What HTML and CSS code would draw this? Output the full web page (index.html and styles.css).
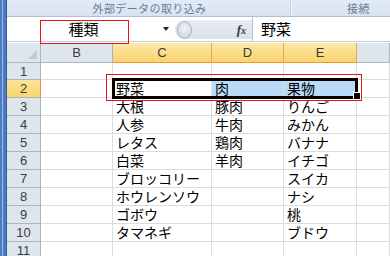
FILE: index.html
```html
<!DOCTYPE html>
<html lang="ja">
<head>
  <meta charset="UTF-8" />
  <title>外部データの取り込み</title>
  <link rel="stylesheet" href="styles.css">
</head>
<body>
  <div class="window">
    <div class="frame-edge"></div>

    <div class="main">
      <div class="ribbon">
        <div class="group group-ext">外部データの取り込み</div>
        <div class="group group-conn">接続</div>
      </div>

      <div class="formula-bar">
        <div class="name-box">種類</div>
        <div class="dropdown"><span class="arrow"></span></div>
        <div class="fx-area">
          <span class="knob"></span>
          <span class="fx">f<span class="fx-x">x</span></span>
        </div>
        <div class="formula-input">野菜</div>
      </div>

      <div class="sheet">
        <div class="hd corner"><span class="corner-tri"></span></div>
        <div class="hd">B</div>
        <div class="hd hd-on">C</div>
        <div class="hd hd-on">D</div>
        <div class="hd hd-on">E</div>
        <div class="hd"></div>

        <div class="rh">1</div>
        <div class="c"></div><div class="c"></div><div class="c"></div><div class="c"></div><div class="c"></div>

        <div class="rh rh-on">2</div>
        <div class="c"></div><div class="c">野菜</div><div class="c sel">肉</div><div class="c sel">果物</div><div class="c"></div>

        <div class="rh">3</div>
        <div class="c"></div><div class="c">大根</div><div class="c">豚肉</div><div class="c">りんご</div><div class="c"></div>

        <div class="rh">4</div>
        <div class="c"></div><div class="c">人参</div><div class="c">牛肉</div><div class="c">みかん</div><div class="c"></div>

        <div class="rh">5</div>
        <div class="c"></div><div class="c">レタス</div><div class="c">鶏肉</div><div class="c">バナナ</div><div class="c"></div>

        <div class="rh">6</div>
        <div class="c"></div><div class="c">白菜</div><div class="c">羊肉</div><div class="c">イチゴ</div><div class="c"></div>

        <div class="rh">7</div>
        <div class="c"></div><div class="c">ブロッコリー</div><div class="c"></div><div class="c">スイカ</div><div class="c"></div>

        <div class="rh">8</div>
        <div class="c"></div><div class="c">ホウレンソウ</div><div class="c"></div><div class="c">ナシ</div><div class="c"></div>

        <div class="rh">9</div>
        <div class="c"></div><div class="c">ゴボウ</div><div class="c"></div><div class="c">桃</div><div class="c"></div>

        <div class="rh">10</div>
        <div class="c"></div><div class="c">タマネギ</div><div class="c"></div><div class="c">ブドウ</div><div class="c"></div>

        <div class="rh">11</div>
        <div class="c"></div><div class="c"></div><div class="c"></div><div class="c"></div><div class="c"></div>
      </div>
    </div>

    <!-- selection frame and the red callouts sit on top of the grid -->
    <div class="selection"></div>
    <div class="fill-handle"></div>
    <div class="callout callout-name"></div>
    <div class="callout callout-range"></div>
  </div>
</body>
</html>
```

FILE: styles.css
```css
* {
  box-sizing: border-box;
  margin: 0;
  padding: 0;
}

body {
  background: #ffffff;
  font-family: "Noto Sans CJK JP", "Liberation Sans", sans-serif;
  color: #000000;
}

.window {
  position: relative;
  display: flex;
  width: 390px;
  height: 256px;
  overflow: hidden;
}

.frame-edge {
  width: 7px;
  flex: none;
  background: linear-gradient(to right, #4d7cc2 0, #4d7cc2 2px, #9dbbe6 2px, #9dbbe6 3px, #4a7bc3 3px, #4a7bc3 6px, #2f5c9f 6px);
}

.main {
  flex: 1;
  display: flex;
  flex-direction: column;
  min-width: 0;
}

/* ribbon group labels */
.ribbon {
  display: flex;
  height: 17px;
  background: linear-gradient(#e1eaf6, #d8e3f1);
  border-bottom: 1px solid #aebfd6;
  font-size: 11px;
  line-height: 16px;
  color: #6b7c93;
  letter-spacing: 0.4px;
}

.group-ext {
  width: 283px;
  text-align: center;
  padding-left: 2px;
}

.group-conn {
  flex: 1;
  border-left: 1px solid #c2d0e2;
  box-shadow: inset 1px 0 0 #f2f6fb;
  padding-left: 56px;
}

/* formula bar */
.formula-bar {
  display: flex;
  height: 26px;
  background: #ffffff;
  border-bottom: 1px solid #c3ccd8;
}

.name-box {
  width: 153px;
  text-align: center;
  font-size: 15px;
  line-height: 24px;
}

.dropdown {
  width: 15px;
  display: flex;
  align-items: center;
  justify-content: center;
}

.arrow {
  width: 0;
  height: 0;
  border-left: 3.5px solid transparent;
  border-right: 3.5px solid transparent;
  border-top: 4px solid #222222;
  margin-left: -4px;
}

.fx-area {
  width: 77px;
  margin: 3px 0 2px;
  display: flex;
  align-items: center;
  justify-content: space-between;
  background: linear-gradient(#e7edf4, #d9e1ea);
  border-radius: 10px 0 0 10px;
  padding: 0 6px 0 2px;
}

.knob {
  width: 15px;
  height: 18px;
  border-radius: 50%;
  border: 1px solid #a9b4c1;
  background: radial-gradient(circle at 50% 40%, #f4f6f8 0, #dfe4ea 40%, #c9d1da 100%);
}

.fx {
  font-family: "Liberation Serif", serif;
  font-style: italic;
  font-weight: bold;
  font-size: 13px;
  color: #3a3a3a;
}

.fx-x {
  font-size: 10px;
}

.formula-input {
  flex: 1;
  border-left: 1px solid #b9c4d1;
  padding-left: 8px;
  font-size: 15px;
  line-height: 24px;
}

/* worksheet grid */
.sheet {
  display: grid;
  grid-template-columns: 34px 72px 99px 72px 73px 1fr;
  grid-template-rows: 20px 17px repeat(10, 18px);
  border-top: 1px solid #ffffff;
}

.hd {
  background: #dfe5ec;
  border-right: 1px solid #aab5c2;
  border-bottom: 1px solid #aab5c2;
  font-family: "Liberation Sans", sans-serif;
  font-size: 13px;
  line-height: 19px;
  text-align: center;
  color: #3b3b3b;
}

.hd-on {
  background: linear-gradient(#fde8a8, #f9d36d);
  border-right-color: #dcae55;
  border-bottom: 1px solid #f29436;
}

.corner {
  position: relative;
}

.corner-tri {
  position: absolute;
  right: 3px;
  bottom: 3px;
  width: 0;
  height: 0;
  border-left: 9px solid transparent;
  border-bottom: 9px solid #c3c9d1;
}

.rh {
  background: #dfe5ec;
  border-right: 1px solid #aab5c2;
  border-bottom: 1px solid #aab5c2;
  font-family: "Liberation Sans", sans-serif;
  font-size: 13px;
  line-height: 17px;
  text-align: center;
  color: #3b3b3b;
}

.rh-on {
  background: linear-gradient(#fde39a, #f9d670);
  border-right-color: #f29436;
}

.c {
  border-right: 1px solid #dadcdf;
  border-bottom: 1px solid #dadcdf;
  font-size: 14px;
  line-height: 17px;
  padding-left: 3px;
  white-space: nowrap;
  overflow: visible;
}

.sel {
  background: #b9dbf8;
}

/* overlays */
.selection {
  position: absolute;
  left: 112px;
  top: 78px;
  width: 246px;
  height: 21px;
  border: 3px solid #000000;
}

.fill-handle {
  position: absolute;
  left: 354px;
  top: 93px;
  width: 6px;
  height: 6px;
  background: #000000;
  outline: 1px solid #ffffff;
}

.callout {
  position: absolute;
  border: 1.5px solid #e8141b;
}

.callout-name {
  left: 40px;
  top: 20px;
  width: 89px;
  height: 24px;
}

.callout-range {
  left: 106px;
  top: 74px;
  width: 256px;
  height: 27px;
}
```
